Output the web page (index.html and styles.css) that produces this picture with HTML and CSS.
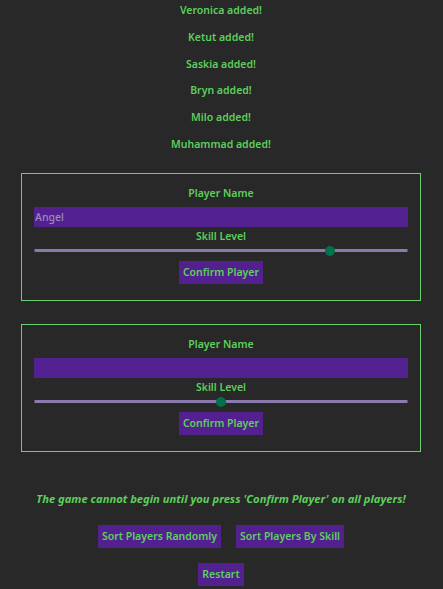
FILE: index.html
```html
<!DOCTYPE html>
<html>
<head>
<meta charset="utf-8">
<link rel="stylesheet" href="styles.css">
</head>
<body>
<div class="page">
  <div class="messages">
    <p>Veronica added!</p>
    <p>Ketut added!</p>
    <p>Saskia added!</p>
    <p>Bryn added!</p>
    <p>Milo added!</p>
    <p>Muhammad added!</p>
  </div>
  <div class="card">
    <label class="label">Player Name</label>
    <input class="name" type="text" value="Angel">
    <label class="label skill">Skill Level</label>
    <input class="slider" type="range" min="0" max="100" value="80">
    <button class="btn">Confirm Player</button>
  </div>
  <div class="card">
    <label class="label">Player Name</label>
    <input class="name" type="text" value="">
    <label class="label skill">Skill Level</label>
    <input class="slider" type="range" min="0" max="100" value="50">
    <button class="btn">Confirm Player</button>
  </div>
  <p class="warning">The game cannot begin until you press 'Confirm Player' on all players!</p>
  <div class="sorts">
    <button class="btn">Sort Players Randomly</button>
    <button class="btn">Sort Players By Skill</button>
  </div>
  <button class="btn restart">Restart</button>
</div>
</body>
</html>
```
FILE: styles.css
```css
html, body {
  margin: 0;
  padding: 0;
  background: #282828;
}
body {
  font-family: "Noto Sans", "Open Sans", sans-serif;
  color: #5ccf5c;
  font-size: 10.5px;
}
.page {
  display: flex;
  flex-direction: column;
  align-items: center;
  padding: 3px 1px 0 0;
}
.messages {
  display: flex;
  flex-direction: column;
  align-items: center;
  gap: 12.8px;
}
.messages p {
  margin: 0;
  line-height: 14px;
  font-weight: 600;
}
.card {
  width: 400px;
  border: 1px solid #6ccf6c;
  margin-top: 22px;
  padding: 12px 12px 16px;
  box-sizing: border-box;
  display: flex;
  flex-direction: column;
  align-items: center;
}
.card + .card {
  margin-top: 23px;
}
.label {
  line-height: 14px;
  font-weight: 600;
}
.name {
  margin: 7px 0 2px;
  width: 100%;
  height: 20px;
  box-sizing: border-box;
  border: none;
  background: #53218f;
  color: #9c8abd;
  font-family: inherit;
  font-size: 10.5px;
  font-weight: 500;
  padding: 0 1px;
  outline: none;
}
.slider {
  -webkit-appearance: none;
  appearance: none;
  width: 100%;
  height: 14px;
  margin: 1px 0 0;
  background: transparent;
}
.slider::-webkit-slider-runnable-track {
  height: 3px;
  background: #8c7aae;
  border-left: 1px solid #5a4c70;
  border-right: 1px solid #5a4c70;
}
.slider::-webkit-slider-thumb {
  -webkit-appearance: none;
  width: 10px;
  height: 10px;
  border-radius: 50%;
  background: #02704a;
  margin-top: -3.5px;
  border: none;
}
.btn {
  background: #53218f;
  color: #5ccf5c;
  border: none;
  font-family: inherit;
  font-size: 10.5px;
  font-weight: 600;
  height: 23px;
  padding: 0 4px;
  line-height: 23px;
  cursor: pointer;
}
.card .btn {
  margin-top: 3px;
}
.warning {
  margin: 40px 0 0;
  font-size: 11.2px;
  font-weight: 700;
  font-style: italic;
  line-height: 14px;
}
.sorts {
  display: flex;
  gap: 15px;
  margin-top: 19px;
}
.restart {
  margin-top: 15px;
}
```
